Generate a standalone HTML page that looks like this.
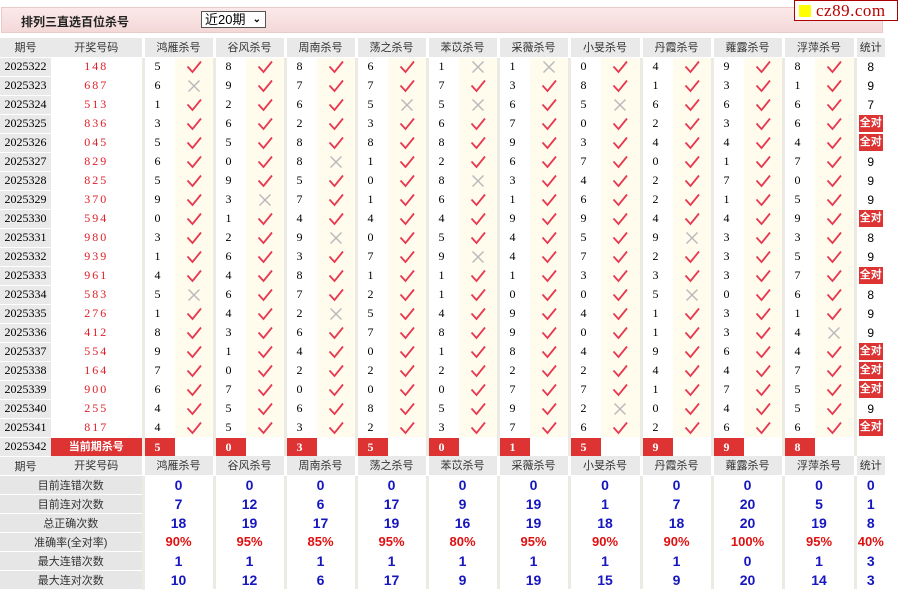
<!DOCTYPE html>
<html><head><meta charset="utf-8"><style>
*{margin:0;padding:0;box-sizing:border-box}
body{width:898px;height:590px;background:#fff;position:relative;overflow:hidden;font-family:"Liberation Sans","Noto Sans CJK SC",sans-serif}
.bar{position:absolute;left:1px;top:7px;width:882px;height:26px;background:linear-gradient(#fbe9e9,#f4d8d8);border:1px solid #ecc9c9}
.bar b{position:absolute;left:19px;top:5px;font-size:12px;color:#222}
.sel{position:absolute;left:199px;top:3px;width:65px;height:17px;border:1px solid #555;background:#fff;font-size:13px;line-height:15px;padding-left:3px;color:#000}
.sel i{position:absolute;right:4px;top:0;font-style:normal;font-size:10px;font-weight:bold}
.logo{position:absolute;left:794px;top:0;width:104px;height:21px;border:1px solid #a00;background:#fff;font-family:"Liberation Serif",serif;font-size:17px;color:#b00;line-height:19px;padding-left:21px;letter-spacing:.5px}
.logo:before{content:"";position:absolute;left:4px;top:4px;width:12px;height:12px;background:#ff0}
table{position:absolute;left:0;top:38px;border-collapse:collapse;table-layout:fixed;width:883px}
td{height:19px;padding:0;font-size:12px;text-align:center;white-space:nowrap;overflow:hidden}
td.q{background:#e9e9e9;border-bottom:1px solid #fff;font-family:"Liberation Serif",serif;font-size:12px}
td.k{color:#e0202a;font-family:"Liberation Serif",serif;letter-spacing:2px}
td.n{border-left:3px solid #ebebe3;text-align:left;padding-left:10px;font-family:"Liberation Serif",serif}
td.m{background:#fffcee}
td.s{border-left:3px solid #ebebe3}
tr.h td{background:#e9e9e9;border-bottom:1px solid #fff;font-size:11px;color:#333}
tr.h td.g{border-left:3px solid #fff;text-align:center}
tr.h td.gs{border-left:3px solid #fff}
.qd{display:block;background:#d33;color:#fff;font-weight:bold;font-size:11px;line-height:17px;margin:0 2px}
tr.c td.n{padding:0}
tr.c .r{display:block;background:#d33;color:#fff;font-weight:bold;width:31px;height:18px;line-height:18px;text-align:left;padding-left:10px}
tr.c td.k{padding:0;letter-spacing:0}
tr.c .kk{display:block;background:#d33;color:#fff;font-weight:bold;height:18px;line-height:18px;font-size:11px;font-family:"Liberation Sans","Noto Sans CJK SC",sans-serif}
tr.t td.l{background:#e6e6e6;border-bottom:1px solid #fff;font-size:11px;color:#333}
tr.t td.v{color:#1616c0;font-weight:bold;font-size:14px;border-left:3px solid #ebebe3}
tr.t td.p{color:#e01010;font-weight:bold;font-size:13px;border-left:3px solid #ebebe3}
svg{display:block;margin:0 auto;width:16px;height:14px}
</style></head><body>
<svg width="0" height="0" style="position:absolute"><defs>
<symbol id="k" viewBox="0 0 16 14"><path d="M1.5 6.5 L6.5 12 L15 1.5" fill="none" stroke="#e8384f" stroke-width="1.8"/></symbol>
<symbol id="x" viewBox="0 0 16 14"><path d="M2.5 1.5 L13.5 12.5 M13.5 1.5 L2.5 12.5" fill="none" stroke="#b8b8b8" stroke-width="1.4"/></symbol>
</defs></svg>
<div class="bar"><b>排列三直选百位杀号</b><div class="sel">近20期<i>&#8964;</i></div></div>
<div class="logo">cz89.com</div>
<table>
<colgroup><col style="width:51px"><col style="width:92px">
<col style="width:32px"><col style="width:39px"><col style="width:32px"><col style="width:39px"><col style="width:32px"><col style="width:39px"><col style="width:32px"><col style="width:39px"><col style="width:32px"><col style="width:39px"><col style="width:32px"><col style="width:39px"><col style="width:32px"><col style="width:40px"><col style="width:32px"><col style="width:39px"><col style="width:32px"><col style="width:39px"><col style="width:32px"><col style="width:40px"><col style="width:30px"></colgroup>
<tr class="h"><td>期号</td><td>开奖号码</td><td class="g" colspan="2">鸿雁杀号</td><td class="g" colspan="2">谷风杀号</td><td class="g" colspan="2">周南杀号</td><td class="g" colspan="2">荡之杀号</td><td class="g" colspan="2">苯苡杀号</td><td class="g" colspan="2">采薇杀号</td><td class="g" colspan="2">小旻杀号</td><td class="g" colspan="2">丹霞杀号</td><td class="g" colspan="2">蕹露杀号</td><td class="g" colspan="2">浮萍杀号</td><td class="gs">统计</td></tr>
<tr><td class="q">2025322</td><td class="k">148</td><td class="n">5</td><td class="m"><svg><use href="#k"/></svg></td><td class="n">8</td><td class="m"><svg><use href="#k"/></svg></td><td class="n">8</td><td class="m"><svg><use href="#k"/></svg></td><td class="n">6</td><td class="m"><svg><use href="#k"/></svg></td><td class="n">1</td><td class="m"><svg><use href="#x"/></svg></td><td class="n">1</td><td class="m"><svg><use href="#x"/></svg></td><td class="n">0</td><td class="m"><svg><use href="#k"/></svg></td><td class="n">4</td><td class="m"><svg><use href="#k"/></svg></td><td class="n">9</td><td class="m"><svg><use href="#k"/></svg></td><td class="n">8</td><td class="m"><svg><use href="#k"/></svg></td><td class="s">8</td></tr>
<tr><td class="q">2025323</td><td class="k">687</td><td class="n">6</td><td class="m"><svg><use href="#x"/></svg></td><td class="n">9</td><td class="m"><svg><use href="#k"/></svg></td><td class="n">7</td><td class="m"><svg><use href="#k"/></svg></td><td class="n">7</td><td class="m"><svg><use href="#k"/></svg></td><td class="n">7</td><td class="m"><svg><use href="#k"/></svg></td><td class="n">3</td><td class="m"><svg><use href="#k"/></svg></td><td class="n">8</td><td class="m"><svg><use href="#k"/></svg></td><td class="n">1</td><td class="m"><svg><use href="#k"/></svg></td><td class="n">3</td><td class="m"><svg><use href="#k"/></svg></td><td class="n">1</td><td class="m"><svg><use href="#k"/></svg></td><td class="s">9</td></tr>
<tr><td class="q">2025324</td><td class="k">513</td><td class="n">1</td><td class="m"><svg><use href="#k"/></svg></td><td class="n">2</td><td class="m"><svg><use href="#k"/></svg></td><td class="n">6</td><td class="m"><svg><use href="#k"/></svg></td><td class="n">5</td><td class="m"><svg><use href="#x"/></svg></td><td class="n">5</td><td class="m"><svg><use href="#x"/></svg></td><td class="n">6</td><td class="m"><svg><use href="#k"/></svg></td><td class="n">5</td><td class="m"><svg><use href="#x"/></svg></td><td class="n">6</td><td class="m"><svg><use href="#k"/></svg></td><td class="n">6</td><td class="m"><svg><use href="#k"/></svg></td><td class="n">6</td><td class="m"><svg><use href="#k"/></svg></td><td class="s">7</td></tr>
<tr><td class="q">2025325</td><td class="k">836</td><td class="n">3</td><td class="m"><svg><use href="#k"/></svg></td><td class="n">6</td><td class="m"><svg><use href="#k"/></svg></td><td class="n">2</td><td class="m"><svg><use href="#k"/></svg></td><td class="n">3</td><td class="m"><svg><use href="#k"/></svg></td><td class="n">6</td><td class="m"><svg><use href="#k"/></svg></td><td class="n">7</td><td class="m"><svg><use href="#k"/></svg></td><td class="n">0</td><td class="m"><svg><use href="#k"/></svg></td><td class="n">2</td><td class="m"><svg><use href="#k"/></svg></td><td class="n">3</td><td class="m"><svg><use href="#k"/></svg></td><td class="n">6</td><td class="m"><svg><use href="#k"/></svg></td><td class="s"><span class="qd">全对</span></td></tr>
<tr><td class="q">2025326</td><td class="k">045</td><td class="n">5</td><td class="m"><svg><use href="#k"/></svg></td><td class="n">5</td><td class="m"><svg><use href="#k"/></svg></td><td class="n">8</td><td class="m"><svg><use href="#k"/></svg></td><td class="n">8</td><td class="m"><svg><use href="#k"/></svg></td><td class="n">8</td><td class="m"><svg><use href="#k"/></svg></td><td class="n">9</td><td class="m"><svg><use href="#k"/></svg></td><td class="n">3</td><td class="m"><svg><use href="#k"/></svg></td><td class="n">4</td><td class="m"><svg><use href="#k"/></svg></td><td class="n">4</td><td class="m"><svg><use href="#k"/></svg></td><td class="n">4</td><td class="m"><svg><use href="#k"/></svg></td><td class="s"><span class="qd">全对</span></td></tr>
<tr><td class="q">2025327</td><td class="k">829</td><td class="n">6</td><td class="m"><svg><use href="#k"/></svg></td><td class="n">0</td><td class="m"><svg><use href="#k"/></svg></td><td class="n">8</td><td class="m"><svg><use href="#x"/></svg></td><td class="n">1</td><td class="m"><svg><use href="#k"/></svg></td><td class="n">2</td><td class="m"><svg><use href="#k"/></svg></td><td class="n">6</td><td class="m"><svg><use href="#k"/></svg></td><td class="n">7</td><td class="m"><svg><use href="#k"/></svg></td><td class="n">0</td><td class="m"><svg><use href="#k"/></svg></td><td class="n">1</td><td class="m"><svg><use href="#k"/></svg></td><td class="n">7</td><td class="m"><svg><use href="#k"/></svg></td><td class="s">9</td></tr>
<tr><td class="q">2025328</td><td class="k">825</td><td class="n">5</td><td class="m"><svg><use href="#k"/></svg></td><td class="n">9</td><td class="m"><svg><use href="#k"/></svg></td><td class="n">5</td><td class="m"><svg><use href="#k"/></svg></td><td class="n">0</td><td class="m"><svg><use href="#k"/></svg></td><td class="n">8</td><td class="m"><svg><use href="#x"/></svg></td><td class="n">3</td><td class="m"><svg><use href="#k"/></svg></td><td class="n">4</td><td class="m"><svg><use href="#k"/></svg></td><td class="n">2</td><td class="m"><svg><use href="#k"/></svg></td><td class="n">7</td><td class="m"><svg><use href="#k"/></svg></td><td class="n">0</td><td class="m"><svg><use href="#k"/></svg></td><td class="s">9</td></tr>
<tr><td class="q">2025329</td><td class="k">370</td><td class="n">9</td><td class="m"><svg><use href="#k"/></svg></td><td class="n">3</td><td class="m"><svg><use href="#x"/></svg></td><td class="n">7</td><td class="m"><svg><use href="#k"/></svg></td><td class="n">1</td><td class="m"><svg><use href="#k"/></svg></td><td class="n">6</td><td class="m"><svg><use href="#k"/></svg></td><td class="n">1</td><td class="m"><svg><use href="#k"/></svg></td><td class="n">6</td><td class="m"><svg><use href="#k"/></svg></td><td class="n">2</td><td class="m"><svg><use href="#k"/></svg></td><td class="n">1</td><td class="m"><svg><use href="#k"/></svg></td><td class="n">5</td><td class="m"><svg><use href="#k"/></svg></td><td class="s">9</td></tr>
<tr><td class="q">2025330</td><td class="k">594</td><td class="n">0</td><td class="m"><svg><use href="#k"/></svg></td><td class="n">1</td><td class="m"><svg><use href="#k"/></svg></td><td class="n">4</td><td class="m"><svg><use href="#k"/></svg></td><td class="n">4</td><td class="m"><svg><use href="#k"/></svg></td><td class="n">4</td><td class="m"><svg><use href="#k"/></svg></td><td class="n">9</td><td class="m"><svg><use href="#k"/></svg></td><td class="n">9</td><td class="m"><svg><use href="#k"/></svg></td><td class="n">4</td><td class="m"><svg><use href="#k"/></svg></td><td class="n">4</td><td class="m"><svg><use href="#k"/></svg></td><td class="n">9</td><td class="m"><svg><use href="#k"/></svg></td><td class="s"><span class="qd">全对</span></td></tr>
<tr><td class="q">2025331</td><td class="k">980</td><td class="n">3</td><td class="m"><svg><use href="#k"/></svg></td><td class="n">2</td><td class="m"><svg><use href="#k"/></svg></td><td class="n">9</td><td class="m"><svg><use href="#x"/></svg></td><td class="n">0</td><td class="m"><svg><use href="#k"/></svg></td><td class="n">5</td><td class="m"><svg><use href="#k"/></svg></td><td class="n">4</td><td class="m"><svg><use href="#k"/></svg></td><td class="n">5</td><td class="m"><svg><use href="#k"/></svg></td><td class="n">9</td><td class="m"><svg><use href="#x"/></svg></td><td class="n">3</td><td class="m"><svg><use href="#k"/></svg></td><td class="n">3</td><td class="m"><svg><use href="#k"/></svg></td><td class="s">8</td></tr>
<tr><td class="q">2025332</td><td class="k">939</td><td class="n">1</td><td class="m"><svg><use href="#k"/></svg></td><td class="n">6</td><td class="m"><svg><use href="#k"/></svg></td><td class="n">3</td><td class="m"><svg><use href="#k"/></svg></td><td class="n">7</td><td class="m"><svg><use href="#k"/></svg></td><td class="n">9</td><td class="m"><svg><use href="#x"/></svg></td><td class="n">4</td><td class="m"><svg><use href="#k"/></svg></td><td class="n">7</td><td class="m"><svg><use href="#k"/></svg></td><td class="n">2</td><td class="m"><svg><use href="#k"/></svg></td><td class="n">3</td><td class="m"><svg><use href="#k"/></svg></td><td class="n">5</td><td class="m"><svg><use href="#k"/></svg></td><td class="s">9</td></tr>
<tr><td class="q">2025333</td><td class="k">961</td><td class="n">4</td><td class="m"><svg><use href="#k"/></svg></td><td class="n">4</td><td class="m"><svg><use href="#k"/></svg></td><td class="n">8</td><td class="m"><svg><use href="#k"/></svg></td><td class="n">1</td><td class="m"><svg><use href="#k"/></svg></td><td class="n">1</td><td class="m"><svg><use href="#k"/></svg></td><td class="n">1</td><td class="m"><svg><use href="#k"/></svg></td><td class="n">3</td><td class="m"><svg><use href="#k"/></svg></td><td class="n">3</td><td class="m"><svg><use href="#k"/></svg></td><td class="n">3</td><td class="m"><svg><use href="#k"/></svg></td><td class="n">7</td><td class="m"><svg><use href="#k"/></svg></td><td class="s"><span class="qd">全对</span></td></tr>
<tr><td class="q">2025334</td><td class="k">583</td><td class="n">5</td><td class="m"><svg><use href="#x"/></svg></td><td class="n">6</td><td class="m"><svg><use href="#k"/></svg></td><td class="n">7</td><td class="m"><svg><use href="#k"/></svg></td><td class="n">2</td><td class="m"><svg><use href="#k"/></svg></td><td class="n">1</td><td class="m"><svg><use href="#k"/></svg></td><td class="n">0</td><td class="m"><svg><use href="#k"/></svg></td><td class="n">0</td><td class="m"><svg><use href="#k"/></svg></td><td class="n">5</td><td class="m"><svg><use href="#x"/></svg></td><td class="n">0</td><td class="m"><svg><use href="#k"/></svg></td><td class="n">6</td><td class="m"><svg><use href="#k"/></svg></td><td class="s">8</td></tr>
<tr><td class="q">2025335</td><td class="k">276</td><td class="n">1</td><td class="m"><svg><use href="#k"/></svg></td><td class="n">4</td><td class="m"><svg><use href="#k"/></svg></td><td class="n">2</td><td class="m"><svg><use href="#x"/></svg></td><td class="n">5</td><td class="m"><svg><use href="#k"/></svg></td><td class="n">4</td><td class="m"><svg><use href="#k"/></svg></td><td class="n">9</td><td class="m"><svg><use href="#k"/></svg></td><td class="n">4</td><td class="m"><svg><use href="#k"/></svg></td><td class="n">1</td><td class="m"><svg><use href="#k"/></svg></td><td class="n">3</td><td class="m"><svg><use href="#k"/></svg></td><td class="n">1</td><td class="m"><svg><use href="#k"/></svg></td><td class="s">9</td></tr>
<tr><td class="q">2025336</td><td class="k">412</td><td class="n">8</td><td class="m"><svg><use href="#k"/></svg></td><td class="n">3</td><td class="m"><svg><use href="#k"/></svg></td><td class="n">6</td><td class="m"><svg><use href="#k"/></svg></td><td class="n">7</td><td class="m"><svg><use href="#k"/></svg></td><td class="n">8</td><td class="m"><svg><use href="#k"/></svg></td><td class="n">9</td><td class="m"><svg><use href="#k"/></svg></td><td class="n">0</td><td class="m"><svg><use href="#k"/></svg></td><td class="n">1</td><td class="m"><svg><use href="#k"/></svg></td><td class="n">3</td><td class="m"><svg><use href="#k"/></svg></td><td class="n">4</td><td class="m"><svg><use href="#x"/></svg></td><td class="s">9</td></tr>
<tr><td class="q">2025337</td><td class="k">554</td><td class="n">9</td><td class="m"><svg><use href="#k"/></svg></td><td class="n">1</td><td class="m"><svg><use href="#k"/></svg></td><td class="n">4</td><td class="m"><svg><use href="#k"/></svg></td><td class="n">0</td><td class="m"><svg><use href="#k"/></svg></td><td class="n">1</td><td class="m"><svg><use href="#k"/></svg></td><td class="n">8</td><td class="m"><svg><use href="#k"/></svg></td><td class="n">4</td><td class="m"><svg><use href="#k"/></svg></td><td class="n">9</td><td class="m"><svg><use href="#k"/></svg></td><td class="n">6</td><td class="m"><svg><use href="#k"/></svg></td><td class="n">4</td><td class="m"><svg><use href="#k"/></svg></td><td class="s"><span class="qd">全对</span></td></tr>
<tr><td class="q">2025338</td><td class="k">164</td><td class="n">7</td><td class="m"><svg><use href="#k"/></svg></td><td class="n">0</td><td class="m"><svg><use href="#k"/></svg></td><td class="n">2</td><td class="m"><svg><use href="#k"/></svg></td><td class="n">2</td><td class="m"><svg><use href="#k"/></svg></td><td class="n">2</td><td class="m"><svg><use href="#k"/></svg></td><td class="n">2</td><td class="m"><svg><use href="#k"/></svg></td><td class="n">2</td><td class="m"><svg><use href="#k"/></svg></td><td class="n">4</td><td class="m"><svg><use href="#k"/></svg></td><td class="n">4</td><td class="m"><svg><use href="#k"/></svg></td><td class="n">7</td><td class="m"><svg><use href="#k"/></svg></td><td class="s"><span class="qd">全对</span></td></tr>
<tr><td class="q">2025339</td><td class="k">900</td><td class="n">6</td><td class="m"><svg><use href="#k"/></svg></td><td class="n">7</td><td class="m"><svg><use href="#k"/></svg></td><td class="n">0</td><td class="m"><svg><use href="#k"/></svg></td><td class="n">0</td><td class="m"><svg><use href="#k"/></svg></td><td class="n">0</td><td class="m"><svg><use href="#k"/></svg></td><td class="n">7</td><td class="m"><svg><use href="#k"/></svg></td><td class="n">7</td><td class="m"><svg><use href="#k"/></svg></td><td class="n">1</td><td class="m"><svg><use href="#k"/></svg></td><td class="n">7</td><td class="m"><svg><use href="#k"/></svg></td><td class="n">5</td><td class="m"><svg><use href="#k"/></svg></td><td class="s"><span class="qd">全对</span></td></tr>
<tr><td class="q">2025340</td><td class="k">255</td><td class="n">4</td><td class="m"><svg><use href="#k"/></svg></td><td class="n">5</td><td class="m"><svg><use href="#k"/></svg></td><td class="n">6</td><td class="m"><svg><use href="#k"/></svg></td><td class="n">8</td><td class="m"><svg><use href="#k"/></svg></td><td class="n">5</td><td class="m"><svg><use href="#k"/></svg></td><td class="n">9</td><td class="m"><svg><use href="#k"/></svg></td><td class="n">2</td><td class="m"><svg><use href="#x"/></svg></td><td class="n">0</td><td class="m"><svg><use href="#k"/></svg></td><td class="n">4</td><td class="m"><svg><use href="#k"/></svg></td><td class="n">5</td><td class="m"><svg><use href="#k"/></svg></td><td class="s">9</td></tr>
<tr><td class="q">2025341</td><td class="k">817</td><td class="n">4</td><td class="m"><svg><use href="#k"/></svg></td><td class="n">5</td><td class="m"><svg><use href="#k"/></svg></td><td class="n">3</td><td class="m"><svg><use href="#k"/></svg></td><td class="n">2</td><td class="m"><svg><use href="#k"/></svg></td><td class="n">3</td><td class="m"><svg><use href="#k"/></svg></td><td class="n">7</td><td class="m"><svg><use href="#k"/></svg></td><td class="n">6</td><td class="m"><svg><use href="#k"/></svg></td><td class="n">2</td><td class="m"><svg><use href="#k"/></svg></td><td class="n">6</td><td class="m"><svg><use href="#k"/></svg></td><td class="n">6</td><td class="m"><svg><use href="#k"/></svg></td><td class="s"><span class="qd">全对</span></td></tr>
<tr class="c"><td class="q">2025342</td><td class="k"><span class="kk">当前期杀号</span></td><td class="n"><span class="r">5</span></td><td></td><td class="n"><span class="r">0</span></td><td></td><td class="n"><span class="r">3</span></td><td></td><td class="n"><span class="r">5</span></td><td></td><td class="n"><span class="r">0</span></td><td></td><td class="n"><span class="r">1</span></td><td></td><td class="n"><span class="r">5</span></td><td></td><td class="n"><span class="r">9</span></td><td></td><td class="n"><span class="r">9</span></td><td></td><td class="n"><span class="r">8</span></td><td></td><td class="s"></td></tr>
<tr class="h"><td>期号</td><td>开奖号码</td><td class="g" colspan="2">鸿雁杀号</td><td class="g" colspan="2">谷风杀号</td><td class="g" colspan="2">周南杀号</td><td class="g" colspan="2">荡之杀号</td><td class="g" colspan="2">苯苡杀号</td><td class="g" colspan="2">采薇杀号</td><td class="g" colspan="2">小旻杀号</td><td class="g" colspan="2">丹霞杀号</td><td class="g" colspan="2">蕹露杀号</td><td class="g" colspan="2">浮萍杀号</td><td class="gs">统计</td></tr>
<tr class="t"><td class="l" colspan="2">目前连错次数</td><td class="v" colspan="2">0</td><td class="v" colspan="2">0</td><td class="v" colspan="2">0</td><td class="v" colspan="2">0</td><td class="v" colspan="2">0</td><td class="v" colspan="2">0</td><td class="v" colspan="2">0</td><td class="v" colspan="2">0</td><td class="v" colspan="2">0</td><td class="v" colspan="2">0</td><td class="v">0</td></tr>
<tr class="t"><td class="l" colspan="2">目前连对次数</td><td class="v" colspan="2">7</td><td class="v" colspan="2">12</td><td class="v" colspan="2">6</td><td class="v" colspan="2">17</td><td class="v" colspan="2">9</td><td class="v" colspan="2">19</td><td class="v" colspan="2">1</td><td class="v" colspan="2">7</td><td class="v" colspan="2">20</td><td class="v" colspan="2">5</td><td class="v">1</td></tr>
<tr class="t"><td class="l" colspan="2">总正确次数</td><td class="v" colspan="2">18</td><td class="v" colspan="2">19</td><td class="v" colspan="2">17</td><td class="v" colspan="2">19</td><td class="v" colspan="2">16</td><td class="v" colspan="2">19</td><td class="v" colspan="2">18</td><td class="v" colspan="2">18</td><td class="v" colspan="2">20</td><td class="v" colspan="2">19</td><td class="v">8</td></tr>
<tr class="t"><td class="l" colspan="2">准确率(全对率)</td><td class="p" colspan="2">90%</td><td class="p" colspan="2">95%</td><td class="p" colspan="2">85%</td><td class="p" colspan="2">95%</td><td class="p" colspan="2">80%</td><td class="p" colspan="2">95%</td><td class="p" colspan="2">90%</td><td class="p" colspan="2">90%</td><td class="p" colspan="2">100%</td><td class="p" colspan="2">95%</td><td class="p">40%</td></tr>
<tr class="t"><td class="l" colspan="2">最大连错次数</td><td class="v" colspan="2">1</td><td class="v" colspan="2">1</td><td class="v" colspan="2">1</td><td class="v" colspan="2">1</td><td class="v" colspan="2">1</td><td class="v" colspan="2">1</td><td class="v" colspan="2">1</td><td class="v" colspan="2">1</td><td class="v" colspan="2">0</td><td class="v" colspan="2">1</td><td class="v">3</td></tr>
<tr class="t"><td class="l" colspan="2">最大连对次数</td><td class="v" colspan="2">10</td><td class="v" colspan="2">12</td><td class="v" colspan="2">6</td><td class="v" colspan="2">17</td><td class="v" colspan="2">9</td><td class="v" colspan="2">19</td><td class="v" colspan="2">15</td><td class="v" colspan="2">9</td><td class="v" colspan="2">20</td><td class="v" colspan="2">14</td><td class="v">3</td></tr>
</table>
</body></html>
